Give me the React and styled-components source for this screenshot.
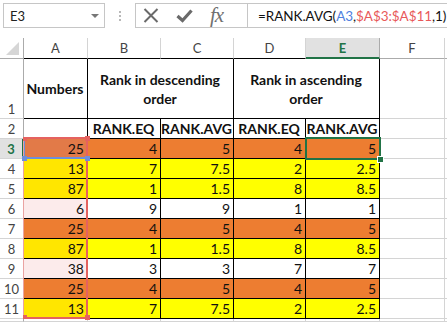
import React from 'react';
import styled, { createGlobalStyle } from 'styled-components';

const Global = createGlobalStyle`
  html, body { margin: 0; padding: 0; background: #fff; }
  body { width: 447px; height: 322px; overflow: hidden; font-family: Lato, "Liberation Sans", sans-serif; }
`;

const Page = styled.div`
  width: 447px;
  height: 322px;
  overflow: hidden;
  background: #fff;
`;

const FormulaBar = styled.div`
  display: flex;
  align-items: stretch;
  height: 25px;
  margin: 3px 0 10px 3px;
`;

const NameBox = styled.div`
  box-sizing: border-box;
  flex: 0 0 102px;
  border: 1px solid #c6c6c6;
  display: flex;
  align-items: center;
  justify-content: space-between;
  padding: 0 5px 0 6px;
  font-size: 13px;
  color: #222;
`;

const Caret = styled.span`
  width: 0;
  height: 0;
  border-left: 4px solid transparent;
  border-right: 4px solid transparent;
  border-top: 4px solid #777;
`;

const Grip = styled.div`
  flex: 0 0 30px;
  display: flex;
  flex-direction: column;
  align-items: center;
  justify-content: center;
  gap: 2px;
  span { width: 2px; height: 2px; background: #b8b8b8; }
`;

const FuncBox = styled.div`
  flex: 1 1 auto;
  min-width: 0;
  overflow: hidden;
  display: flex;
  border: 1px solid #c6c6c6;
  border-right: none;
`;

const FuncButtons = styled.div`
  box-sizing: border-box;
  flex: 0 0 112px;
  display: flex;
  align-items: center;
  padding-left: 7px;
  gap: 17px;
  border-right: 1px solid #c6c6c6;
`;

const Fx = styled.span`
  font-family: "Liberation Serif", serif;
  font-style: italic;
  font-size: 21px;
  line-height: 1;
  color: #707070;
  letter-spacing: -1px;
`;

const FormulaText = styled.div`
  display: flex;
  align-items: center;
  padding-left: 10px;
  font-size: 13.5px;
  letter-spacing: -0.05px;
  color: #111;
  white-space: nowrap;
`;

const Ref = styled.span`
  color: ${(p) => p.$c};
`;

const Sheet = styled.div`
  position: relative;
  display: grid;
  grid-template-columns: 24px 64px 73px 73px 72px 74px 65px 1fr;
  grid-template-rows: 21px 60px repeat(10, 20px) 1fr;
  height: 284px;
`;

const Corner = styled.div`
  box-sizing: border-box;
  border-right: 1px solid #ababab;
  border-bottom: 1px solid #ababab;
  display: flex;
  align-items: flex-end;
  justify-content: flex-end;
  padding: 0 4px 3px 0;
`;

const ColHead = styled.div`
  box-sizing: border-box;
  display: flex;
  align-items: center;
  justify-content: center;
  font-size: 13px;
  color: ${(p) => (p.$active ? '#217346' : '#444')};
  font-weight: ${(p) => (p.$active ? 700 : 400)};
  background: ${(p) => (p.$active ? '#e1e1e1' : '#fff')};
  border-right: 1px solid ${(p) => (p.$active ? '#ababab' : '#d4d4d4')};
  border-bottom: ${(p) => (p.$active ? '2px solid #217346' : `1px solid ${p.$edge || '#ababab'}`)};
`;

const RowHead = styled.div`
  box-sizing: border-box;
  display: flex;
  align-items: flex-end;
  justify-content: center;
  padding-bottom: 1px;
  font-size: 13px;
  color: ${(p) => (p.$active ? '#217346' : '#444')};
  font-weight: ${(p) => (p.$active ? 700 : 400)};
  background: ${(p) => (p.$active ? '#e1e1e1' : '#fff')};
  border-right: ${(p) => (p.$active ? '2px solid #217346' : '1px solid #ababab')};
  border-bottom: 1px solid #d4d4d4;
`;

const Cell = styled.div`
  box-sizing: border-box;
  display: flex;
  align-items: center;
  justify-content: ${(p) => (p.$center ? 'center' : 'flex-end')};
  text-align: center;
  padding: 0 3px 0 2px;
  font-size: 14px;
  line-height: 19px;
  font-weight: ${(p) => (p.$bold ? 700 : 400)};
  color: #111;
  background: ${(p) => p.$bg || '#fff'};
  border-right: 1px solid ${(p) => (p.$grid ? '#d4d4d4' : '#000')};
  border-bottom: 1px solid ${(p) => (p.$grid ? '#d4d4d4' : '#000')};
  grid-column: span ${(p) => p.$span || 1};
`;

const RangeBox = styled.div`
  position: absolute;
  box-sizing: border-box;
  border: 2px solid ${(p) => p.$c};
  ${(p) => (p.$thinLeft ? `border-left: 1px solid ${p.$thinLeft};` : '')}
  pointer-events: none;
`;

const Handle = styled.div`
  position: absolute;
  box-sizing: border-box;
  width: ${(p) => p.$s || 5}px;
  height: ${(p) => p.$s || 5}px;
  background: ${(p) => p.$c};
  ${(p) => (p.$ring ? 'outline: 1px solid #fff;' : '')}
`;

const ORANGE = '#ED7D31';
const YELLOW = '#FFFF00';
const A_YELLOW = '#FFE600';
const A_PINK = '#FCEBEB';

const rows = [
  { n: 3, a: '25', aBg: '#E27A48', bg: ORANGE, v: ['4', '5', '4', '5'] },
  { n: 4, a: '13', aBg: A_YELLOW, bg: YELLOW, v: ['7', '7.5', '2', '2.5'] },
  { n: 5, a: '87', aBg: A_YELLOW, bg: YELLOW, v: ['1', '1.5', '8', '8.5'] },
  { n: 6, a: '6', aBg: A_PINK, bg: '#fff', v: ['9', '9', '1', '1'] },
  { n: 7, a: '25', aBg: ORANGE, bg: ORANGE, v: ['4', '5', '4', '5'] },
  { n: 8, a: '87', aBg: A_YELLOW, bg: YELLOW, v: ['1', '1.5', '8', '8.5'] },
  { n: 9, a: '38', aBg: A_PINK, bg: '#fff', v: ['3', '3', '7', '7'] },
  { n: 10, a: '25', aBg: ORANGE, bg: ORANGE, v: ['4', '5', '4', '5'] },
  { n: 11, a: '13', aBg: A_YELLOW, bg: YELLOW, v: ['7', '7.5', '2', '2.5'] },
];

const RED = '#E5625F';
const BLUE = '#6E8FDA';
const GREEN = '#217346';

export default function App() {
  return (
    <Page>
      <Global />
      <FormulaBar>
        <NameBox>
          <span>E3</span>
          <Caret />
        </NameBox>
        <Grip>
          <span />
          <span />
          <span />
        </Grip>
        <FuncBox>
          <FuncButtons>
            <svg width="16" height="15" viewBox="0 0 16 15">
              <path d="M1.5 1 L14.5 14 M14.5 1 L1.5 14" stroke="#6a6a6a" strokeWidth="2" fill="none" />
            </svg>
            <svg width="17" height="14" viewBox="0 0 17 14">
              <path d="M1.5 7 L6.5 11.5 L15.5 1.5" stroke="#6a6a6a" strokeWidth="3.2" fill="none" />
            </svg>
            <Fx>fx</Fx>
          </FuncButtons>
          <FormulaText>
            =RANK.AVG(<Ref $c="#4f81e0">A3</Ref>,<Ref $c="#e8595a">$A$3:$A$11</Ref>,1)
          </FormulaText>
        </FuncBox>
      </FormulaBar>

      <Sheet>
        <Corner>
          <svg width="13" height="13" viewBox="0 0 13 13">
            <path d="M13 0 L13 13 L0 13 Z" fill="#d6d6d6" />
          </svg>
        </Corner>
        {['A', 'B', 'C', 'D'].map((c) => (
          <ColHead key={c} $edge="#000">{c}</ColHead>
        ))}
        <ColHead $active>E</ColHead>
        <ColHead>F</ColHead>
        <ColHead />

        <RowHead>1</RowHead>
        <Cell $bold $center>Numbers</Cell>
        <Cell $bold $center $span={2}>Rank in descending order</Cell>
        <Cell $bold $center $span={2}>Rank in ascending order</Cell>
        <Cell $grid />
        <Cell $grid />

        <RowHead>2</RowHead>
        <Cell />
        <Cell $bold $center>RANK.EQ</Cell>
        <Cell $bold $center>RANK.AVG</Cell>
        <Cell $bold $center>RANK.EQ</Cell>
        <Cell $bold $center>RANK.AVG</Cell>
        <Cell $grid />
        <Cell $grid />

        {rows.map((r) => (
          <React.Fragment key={r.n}>
            <RowHead $active={r.n === 3}>{r.n}</RowHead>
            <Cell $bg={r.aBg}>{r.a}</Cell>
            {r.v.map((x, i) => (
              <Cell key={i} $bg={r.bg}>{x}</Cell>
            ))}
            <Cell $grid />
            <Cell $grid />
          </React.Fragment>
        ))}

        <RowHead />
        <Cell $grid />
        <Cell $grid />
        <Cell $grid />
        <Cell $grid />
        <Cell $grid />
        <Cell $grid />
        <Cell $grid />

        <RangeBox $c={BLUE} style={{ left: 23, top: 99, width: 65, height: 22 }} />
        <RangeBox $c={RED} $thinLeft="#eaa3a2" style={{ left: 23, top: 99, width: 65, height: 182 }} />
        <Handle $c={RED} $s={4} style={{ left: 23, top: 99 }} />
        <Handle $c={RED} style={{ left: 85, top: 98 }} />
        <Handle $c={BLUE} style={{ left: 22, top: 118 }} />
        <Handle $c={BLUE} style={{ left: 85, top: 118 }} />
        <Handle $c={RED} $s={4} style={{ left: 23, top: 277 }} />
        <Handle $c={RED} style={{ left: 85, top: 277 }} />

        <RangeBox $c={GREEN} style={{ left: 305, top: 99, width: 76, height: 23 }} />
        <Handle $c={GREEN} $ring style={{ left: 378, top: 119 }} />
      </Sheet>
    </Page>
  );
}
